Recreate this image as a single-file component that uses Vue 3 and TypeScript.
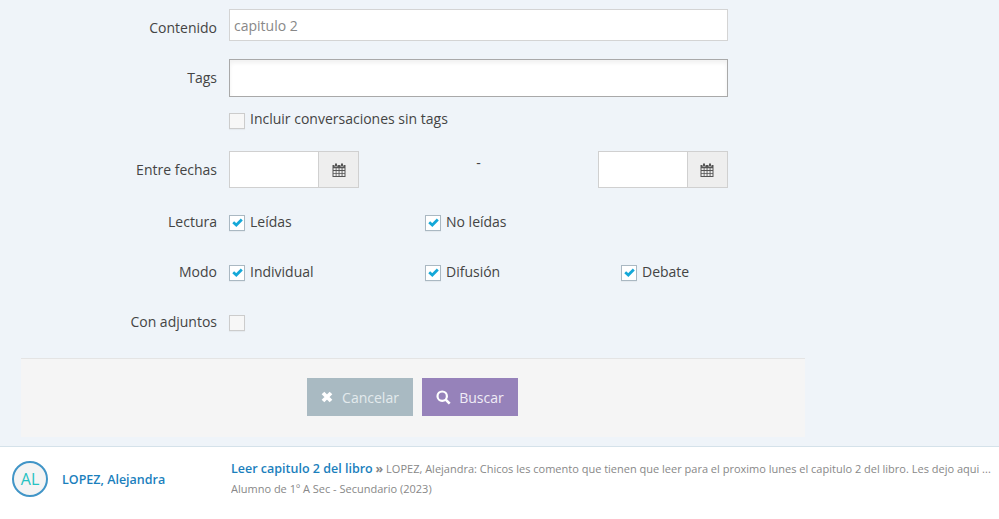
<script setup lang="ts">
interface Check { label: string; checked: boolean }
const lectura: Check[] = [
  { label: 'Leídas', checked: true },
  { label: 'No leídas', checked: true },
]
const modo: Check[] = [
  { label: 'Individual', checked: true },
  { label: 'Difusión', checked: true },
  { label: 'Debate', checked: true },
]
</script>

<template>
  <div class="page">
    <form class="form" @submit.prevent>
      <div class="row row-contenido">
        <label class="lbl">Contenido</label>
        <input class="text text-sm" type="text" value="capitulo 2" />
      </div>
      <div class="row row-tags">
        <label class="lbl">Tags</label>
        <input class="text text-lg" type="text" />
      </div>
      <div class="row row-incl">
        <span class="lbl"></span>
        <div class="check"><span class="box"></span><span>Incluir conversaciones sin tags</span></div>
      </div>
      <div class="row row-dates">
        <label class="lbl lbl-dates">Entre fechas</label>
        <div class="dates">
          <div class="date">
            <input class="date-input" type="text" />
            <span class="addon">
              <svg class="cal" viewBox="0 0 14 14" width="14" height="14">
                <path fill="#555" d="M3 0.5h2v2.500H3zM9 .5h2v2.500H9z" />
                <path fill="#555" fill-rule="evenodd" d="M.5 2h2v1.600h3V2h3v1.600h3V2h2v12H.5zM1.500 5.200v1.900h2.200V5.200zm3 0v1.900h2.100V5.200zm3 0v1.900h2.100V5.200zm3 0v1.900h2V5.200zM1.500 8v1.900h2.200V8zm3 0v1.900h2.100V8zm3 0v1.900h2.100V8zm3 0v1.900h2V8zM1.500 10.800v2.200h2.200v-2.200zm3 0v2.200h2.100v-2.200zm3 0v2.200h2.100v-2.200zm3 0v2.200h2v-2.200z" />
              </svg>
            </span>
          </div>
          <span class="dash">-</span>
          <div class="date">
            <input class="date-input" type="text" />
            <span class="addon">
              <svg class="cal" viewBox="0 0 14 14" width="14" height="14">
                <path fill="#555" d="M3 0.5h2v2.500H3zM9 .5h2v2.500H9z" />
                <path fill="#555" fill-rule="evenodd" d="M.5 2h2v1.600h3V2h3v1.600h3V2h2v12H.5zM1.500 5.200v1.900h2.200V5.200zm3 0v1.900h2.100V5.200zm3 0v1.900h2.100V5.200zm3 0v1.900h2V5.200zM1.500 8v1.900h2.200V8zm3 0v1.900h2.100V8zm3 0v1.900h2.100V8zm3 0v1.900h2V8zM1.500 10.800v2.200h2.200v-2.200zm3 0v2.200h2.100v-2.200zm3 0v2.200h2.100v-2.200zm3 0v2.200h2v-2.200z" />
              </svg>
            </span>
          </div>
        </div>
      </div>
      <div class="row row-lectura">
        <label class="lbl">Lectura</label>
        <div class="checks">
          <div v-for="c in lectura" :key="c.label" class="check">
            <span class="box on">
              <svg viewBox="0 0 11 9" width="11" height="9"><path d="M1.200 4.300 4.300 7 9.800 1.600" fill="none" stroke="#14a8d8" stroke-width="2.800" /></svg>
            </span>
            <span>{{ c.label }}</span>
          </div>
        </div>
      </div>
      <div class="row row-modo">
        <label class="lbl">Modo</label>
        <div class="checks">
          <div v-for="c in modo" :key="c.label" class="check">
            <span class="box on">
              <svg viewBox="0 0 11 9" width="11" height="9"><path d="M1.200 4.300 4.300 7 9.800 1.600" fill="none" stroke="#14a8d8" stroke-width="2.800" /></svg>
            </span>
            <span>{{ c.label }}</span>
          </div>
        </div>
      </div>
      <div class="row row-adj">
        <label class="lbl">Con adjuntos</label>
        <div class="check"><span class="box"></span></div>
      </div>
      <div class="actions">
        <button class="btn cancel" type="button">
          <svg viewBox="0 0 12 12" width="12" height="12"><path d="M2 2l8 8M10 2l-8 8" stroke="#fff" stroke-width="3.800" fill="none" /></svg>
          <span>Cancelar</span>
        </button>
        <button class="btn search" type="button">
          <svg viewBox="0 0 15 15" width="15" height="15"><circle cx="6.200" cy="6.200" r="4.700" fill="none" stroke="#fff" stroke-width="2.200" /><path d="M9.700 9.700l4 4" stroke="#fff" stroke-width="2.600" fill="none" /></svg>
          <span>Buscar</span>
        </button>
      </div>
    </form>
    <section class="result">
      <div class="avatar">AL</div>
      <a class="name">LOPEZ, Alejandra</a>
      <div class="body">
        <div class="line"><a class="subject">Leer capitulo 2 del libro</a> <b class="raquo">»</b> LOPEZ, Alejandra: Chicos les comento que tienen que leer para el proximo lunes el capitulo 2 del libro. Les dejo aqui ...</div>
        <div class="sub">Alumno de 1º A Sec - Secundario (2023)</div>
      </div>
    </section>
  </div>
</template>

<style>
html, body { margin: 0; background: #fff; }
</style>

<style scoped>
.page {
  width: 999px;
  height: 519px;
  overflow: hidden;
  font-family: "Open Sans", sans-serif;
  font-size: 14px;
  color: #444;
  background: #fff;
}
.form {
  height: 447px;
  box-sizing: border-box;
  padding: 9px 0 0 21px;
  background: #eff4f9;
  border-bottom: 1px solid #d5e2ea;
}
.row {
  display: flex;
  width: 707px;
}
.lbl {
  flex: 0 0 208px;
  padding-right: 12px;
  box-sizing: border-box;
  text-align: right;
  line-height: 20px;
  padding-top: 9px;
}
.row-incl .lbl, .row-lectura .lbl, .row-modo .lbl, .row-adj .lbl { padding-top: 1px; }
.text {
  width: 499px;
  box-sizing: border-box;
  background: #fff;
  font: inherit;
  color: #888;
  outline: none;
  margin: 0;
}
.text-sm {
  height: 32px;
  padding: 0 4px;
  border: 1px solid #d4d4d4;
}
.text-lg {
  height: 38px;
  border: 1px solid #a9a9a9;
  box-shadow: inset 0 3px 4px rgba(0, 0, 0, 0.06);
}
.row-tags { margin-top: 18px; }
.row-incl { margin-top: 12px; line-height: 20px; align-items: center; }
.row-dates { margin-top: 22px; }
.row-lectura { margin-top: 23px; }
.row-modo { margin-top: 29px; }
.row-adj { margin-top: 29px; }
.check {
  display: flex;
  align-items: center;
  gap: 5px;
  height: 20px;
}
.checks {
  display: grid;
  grid-template-columns: repeat(3, 196px);
}
.box {
  width: 14px;
  height: 14px;
  border: 1px solid #ccc;
  background: #f7f7f7;
  display: flex;
  align-items: center;
  justify-content: center;
  box-sizing: content-box;
  margin-top: 3px;
  box-shadow: 0 1px 1px rgba(0,0,0,.04);
}
.box.on {
  border-color: #aab8c2;
  background: #fff;
}
.dates {
  display: flex;
  justify-content: space-between;
  width: 499px;
}
.date {
  display: flex;
  width: 130px;
  height: 37px;
}
.date-input {
  width: 89px;
  box-sizing: border-box;
  border: 1px solid #d0d0d0;
  border-right: 0;
  background: #fff;
  margin: 0;
  padding: 0;
  outline: none;
}
.addon {
  width: 41px;
  box-sizing: border-box;
  border: 1px solid #d0d0d0;
  background: #eee;
  display: flex;
  align-items: center;
  justify-content: center;
}
.dash {
  line-height: 24px;
  font-size: 14px;
}
.actions {
  margin-top: 26px;
  width: 784px;
  height: 79px;
  box-sizing: border-box;
  border-top: 1px solid #e4e4e4;
  background: #f5f5f5;
  display: flex;
  justify-content: center;
  gap: 9px;
  padding: 19px 1px 0 0;
}
.btn {
  height: 38px;
  border: 0;
  color: #fff;
  font: inherit;
  display: flex;
  align-items: center;
  justify-content: center;
  gap: 8px;
  padding: 0;
}
.cancel { width: 106px; background: #a9bac2; color: #e3eaed; gap: 9px; }
.search { width: 96px; background: #9682ba; color: #f0ecf6; }
.result {
  height: 72px;
  display: flex;
  align-items: center;
  background: #fff;
}
.avatar {
  width: 32px;
  height: 32px;
  margin-left: 12px;
  margin-top: -8px;
  border: 2px solid #4195c7;
  border-radius: 50%;
  background: #f4f4f4;
  color: #25c2c2;
  font-size: 16px;
  line-height: 32px;
  text-align: center;
}
.name {
  margin-left: 14px;
  margin-top: -8px;
  width: 169px;
  color: #1b7fbd;
  font-weight: 600;
  font-size: 12.500px;
}
.body {
  margin-top: -8px;
  width: 762px;
  white-space: nowrap;
  overflow: hidden;
}
.line {
  font-size: 11px;
  color: #888;
  line-height: 20px;
}
.subject {
  color: #1b7fbd;
  font-weight: 600;
  font-size: 12.500px;
}
.raquo { font-weight: 700; font-size: 12.500px; }
.sub {
  font-size: 11px;
  color: #888;
  line-height: 20px;
}
</style>
